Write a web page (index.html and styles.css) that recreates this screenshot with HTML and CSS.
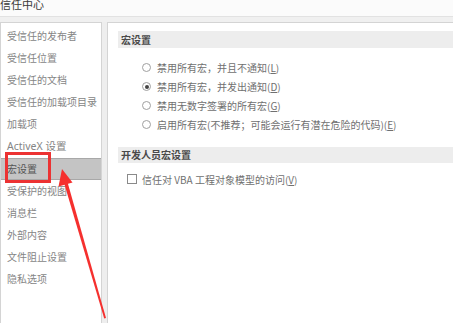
FILE: index.html
```html
<!DOCTYPE html>
<html lang="zh">
<head>
<meta charset="utf-8">
<link rel="stylesheet" href="styles.css">
</head>
<body>
<div class="titlebar"><span class="title">信任中心</span></div>
<div class="strip"></div>
<div class="main">
  <ul class="nav">
    <li>受信任的发布者</li>
    <li>受信任位置</li>
    <li>受信任的文档</li>
    <li>受信任的加载项目录</li>
    <li>加载项</li>
    <li class="latin">ActiveX 设置</li>
    <li class="selected">宏设置</li>
    <li>受保护的视图</li>
    <li>消息栏</li>
    <li>外部内容</li>
    <li>文件阻止设置</li>
    <li>隐私选项</li>
  </ul>
  <div class="content">
    <div class="section-head">宏设置</div>
    <div class="options">
      <div class="opt"><span class="radio"></span><span>禁用所有宏，并且不通知(<u>L</u>)</span></div>
      <div class="opt"><span class="radio checked"></span><span>禁用所有宏，并发出通知(<u>D</u>)</span></div>
      <div class="opt"><span class="radio"></span><span>禁用无数字签署的所有宏(<u>G</u>)</span></div>
      <div class="opt"><span class="radio"></span><span>启用所有宏(不推荐；可能会运行有潜在危险的代码)(<u>E</u>)</span></div>
    </div>
    <div class="section-head dev">开发人员宏设置</div>
    <div class="check-row"><span class="checkbox"></span><span>信任对 VBA 工程对象模型的访问(<u>V</u>)</span></div>
  </div>
</div>
<div class="highlight"></div>
<svg class="arrow" width="453" height="323" viewBox="0 0 453 323">
  <polygon points="62,169 58.5,186.5 72.5,182.5" fill="#f5302e"/>
  <polygon points="64.2,183.5 67.6,182.5 106,318 104.2,318.5" fill="#f5302e"/>
</svg>
</body>
</html>
```
FILE: styles.css
```css
* { box-sizing: border-box; }
html, body { margin: 0; padding: 0; }
body {
  width: 453px;
  height: 323px;
  overflow: hidden;
  background: #ffffff;
  font-family: "Noto Sans CJK SC", "Noto Sans", sans-serif;
  font-size: 10px;
  color: #666;
  position: relative;
}
.titlebar {
  height: 16px;
  overflow: hidden;
  background: #fbfbfb;
}
.title {
  display: block;
  margin-top: -3px;
  font-size: 11px;
  line-height: 14px;
  color: #3a3a3a;
}
.strip {
  height: 6px;
  background: #f0f0f0;
  border-top: 1px solid #e2e2e2;
}
.main {
  display: flex;
  gap: 5px;
  height: 301px;
  background: #eeeeee;
}
.nav {
  list-style: none;
  margin: 0;
  padding: 2px 0 0 0;
  width: 102px;
  background: #fff;
  border: 1px solid #d4d4d4;
  border-bottom: none;
}
.nav li {
  height: 22px;
  line-height: 22px;
  padding-left: 6px;
  color: #858585;
  white-space: nowrap;
}
.nav li.latin { font-family: "Noto Sans", "Noto Sans CJK SC", sans-serif; font-size: 10.5px; }
.nav li.selected {
  background: #c4c4c4;
  border-top: 1px solid #a8a8a8;
  border-bottom: 1px solid #a8a8a8;
  line-height: 20px;
  color: #555;
  margin-top: 1px;
}
.content {
  flex: 1;
  background: #fff;
  border-left: 1px solid #d4d4d4;
  border-top: 1px solid #d4d4d4;
  padding: 8px 0 0 10px;
}
.section-head {
  height: 17px;
  line-height: 17px;
  background: #ededed;
  padding-left: 3px;
  color: #4a4a4a;
  font-weight: bold;
}
.options {
  margin-top: 10px;
  padding-left: 24px;
}
.opt {
  height: 19px;
  display: flex;
  align-items: center;
  gap: 6px;
  color: #707070;
}
.radio {
  width: 9px;
  height: 9px;
  border: 1px solid #a0a0a0;
  border-radius: 50%;
  background: #fff;
  display: flex;
  align-items: center;
  justify-content: center;
}
.radio.checked::after {
  content: "";
  width: 4px;
  height: 4px;
  border-radius: 50%;
  background: #444;
}
.section-head.dev {
  margin-top: 13px;
  height: 16px;
  line-height: 16px;
}
.check-row {
  margin-top: 6px;
  padding-left: 9px;
  height: 20px;
  display: flex;
  align-items: center;
  gap: 5px;
  color: #707070;
}
.checkbox {
  width: 10px;
  height: 10px;
  border: 1px solid #8a8a8a;
  background: #fff;
}
u { text-decoration: underline; }
.highlight {
  position: absolute;
  left: 5px;
  top: 152px;
  width: 46px;
  height: 31px;
  border: 3px solid #ec3232;
}
.arrow {
  position: absolute;
  left: 0;
  top: 0;
  pointer-events: none;
}
```
